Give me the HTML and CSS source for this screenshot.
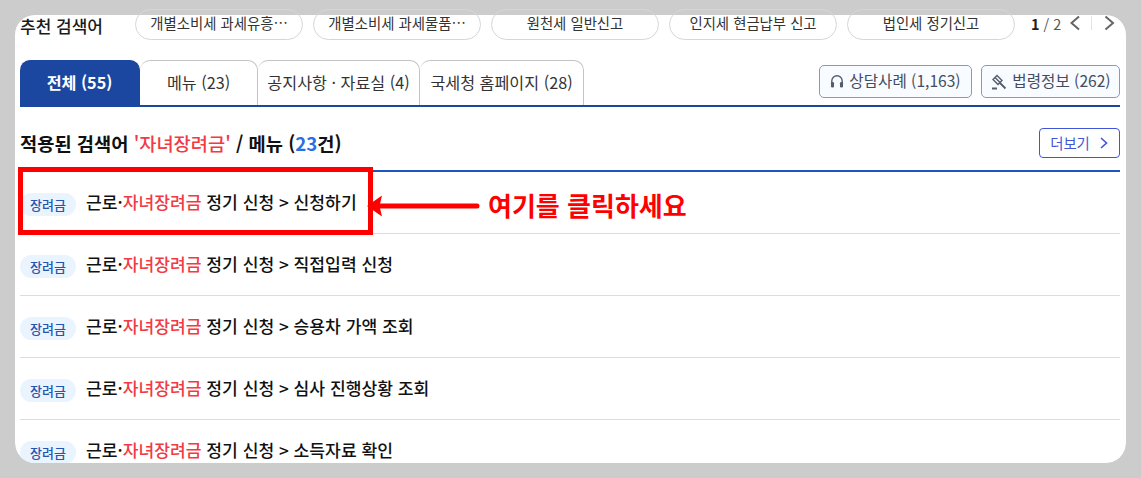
FILE: index.html
```html
<!DOCTYPE html>
<html lang="ko">
<head>
<meta charset="utf-8">
<title>추천 검색어</title>
<link rel="stylesheet" href="styles.css">
</head>
<body>
<div class="page">
  <main class="card">
    <section class="suggest">
      <h2 class="suggest-title">추천 검색어</h2>
      <div class="chips">
        <a class="chip">개별소비세 과세유흥…</a>
        <a class="chip">개별소비세 과세물품…</a>
        <a class="chip">원천세 일반신고</a>
        <a class="chip">인지세 현금납부 신고</a>
        <a class="chip">법인세 정기신고</a>
      </div>
      <div class="pager">
        <span class="pager-num"><b>1</b> / 2</span>
        <svg class="pager-arrow" width="12" height="16" viewBox="0 0 12 16"><path d="M10 1.500 2.500 8l7.500 6.500" /></svg>
        <span class="pager-sep"></span>
        <svg class="pager-arrow" width="12" height="16" viewBox="0 0 12 16"><path d="M1.500 1.500 9 8l-7.500 6.500" /></svg>
      </div>
    </section>

    <nav class="tabs">
      <a class="tab tab-active tab-all">전체 (55)</a>
      <a class="tab tab-menu">메뉴 (23)</a>
      <a class="tab tab-notice">공지사항 · 자료실 (4)</a>
      <a class="tab tab-home">국세청 홈페이지 (28)</a>
      <div class="side-buttons">
        <a class="side-btn side-btn-a">
          <svg width="14" height="15" viewBox="0 0 14 15"><path class="ico-line" d="M1.800 9V7a5.200 5.200 0 0 1 10.400 0v2"/><rect class="ico-fill" x="1" y="8" width="3" height="5.500" rx="1.200"/><rect class="ico-fill" x="10" y="8" width="3" height="5.500" rx="1.200"/></svg>
          상담사례 (1,163)
        </a>
        <a class="side-btn side-btn-b">
          <svg width="17" height="16" viewBox="0 0 17 16"><path class="ico-line" d="M7 1.500 12 6.500 8 10.500 3 5.500z"/><path class="ico-line" d="M5 3.500l5 5"/><path class="ico-thick" d="M9.500 8.500 15.500 14.500M2 14.500h5"/></svg>
          법령정보 (262)
        </a>
      </div>
    </nav>

    <div class="result-head">
      <h3 class="result-title">적용된 검색어 <span class="hl">'자녀장려금'</span> / 메뉴 (<span class="count">23</span>건)</h3>
      <a class="more">더보기
        <svg width="10" height="14" viewBox="0 0 10 14"><path d="M2 2l5.500 5L2 12"/></svg>
      </a>
    </div>

    <ul class="results">
      <li class="row"><span class="badge">장려금</span><a class="row-link">근로·<span class="hl">자녀장려금</span> 정기 신청 &gt; 신청하기</a></li>
      <li class="row"><span class="badge">장려금</span><a class="row-link">근로·<span class="hl">자녀장려금</span> 정기 신청 &gt; 직접입력 신청</a></li>
      <li class="row"><span class="badge">장려금</span><a class="row-link">근로·<span class="hl">자녀장려금</span> 정기 신청 &gt; 승용차 가액 조회</a></li>
      <li class="row"><span class="badge">장려금</span><a class="row-link">근로·<span class="hl">자녀장려금</span> 정기 신청 &gt; 심사 진행상황 조회</a></li>
      <li class="row"><span class="badge">장려금</span><a class="row-link">근로·<span class="hl">자녀장려금</span> 정기 신청 &gt; 소득자료 확인</a></li>
    </ul>
  </main>

  <div class="mark-box"></div>
  <svg class="mark-arrow" width="114" height="26" viewBox="0 0 114 26"><path class="mark-shaft" d="M10 13h100"/><path class="mark-head" d="M0 13 15 2.500 12.500 13 15 23.500z"/></svg>
  <div class="mark-text">여기를 클릭하세요</div>
</div>
</body>
</html>
```

FILE: styles.css
```css
* { box-sizing: border-box; }
html, body { margin: 0; padding: 0; }
body {
  background: #cccccc;
  font-family: "Noto Sans CJK KR", sans-serif;
  color: #222;
}
a { text-decoration: none; color: inherit; }
h2, h3, ul { margin: 0; padding: 0; list-style: none; }

.page {
  position: relative;
  width: 1141px;
  height: 478px;
  padding: 15px;
  overflow: hidden;
}
.card {
  display: flow-root;
  width: 1111px;
  height: 448px;
  padding: 0 6px 0 5px;
  background: #fff;
  border-radius: 20px;
  clip-path: inset(-7px 0 0 0 round 20px);
}

/* suggested keywords */
.suggest {
  display: flex;
  align-items: center;
  height: 31px;
  margin-top: -6px;
}
.suggest-title {
  width: 115px;
  font-size: 17px;
  font-weight: 500;
  color: #1b1b1b;
  line-height: 31px;
  padding-top: 2px;
}
.chips { display: flex; gap: 10px; }
.chip {
  width: 168px;
  height: 31px;
  border: 1px solid #d6d6d6;
  border-radius: 16px;
  font-size: 14.4px;
  line-height: 25px;
  text-align: center;
  color: #333;
}
.pager {
  display: flex;
  align-items: center;
  margin-left: 16px;
  padding-bottom: 3px;
  color: #555;
  font-size: 14.4px;
}
.pager-num { width: 38px; white-space: nowrap; }
.pager-num b { color: #222; font-weight: 700; }
.pager-arrow { fill: none; stroke: #666; stroke-width: 2; }
.pager-arrow:last-child { margin-left: 12px; }
.pager-sep { width: 1px; height: 14px; background: #e3e3e3; margin-left: 10px; }

/* tabs */
.tabs {
  display: flex;
  height: 47px;
  margin-top: 20px;
  border-bottom: 2px solid #1c47a0;
}
.tab {
  display: flex;
  align-items: center;
  justify-content: center;
  height: 45px;
  padding-bottom: 3px;
  border: 1px solid #c4c4c4;
  border-bottom: 0;
  border-left-width: 0;
  border-radius: 10px 10px 0 0;
  font-size: 16.2px;
  color: #333;
  white-space: nowrap;
}
.tab-active {
  background: #1c47a0;
  border-color: #1c47a0;
  color: #fff;
  font-weight: 700;
}
.tab-all { width: 120px; }
.tab-menu { width: 118px; }
.tab-notice { width: 162px; }
.tab-home { width: 164px; }
.side-buttons {
  display: flex;
  gap: 9px;
  margin-left: auto;
  padding-top: 5px;
}
.side-btn {
  display: flex;
  align-items: center;
  justify-content: center;
  gap: 5px;
  height: 33px;
  padding-bottom: 3px;
  border: 1px solid #7f99d2;
  border-radius: 5px;
  background: #f8fbff;
  font-size: 15.6px;
  color: #444c5e;
  white-space: nowrap;
}
.side-btn svg { margin-top: 3px; }
.side-btn-a { width: 153px; }
.side-btn-b { width: 139px; }
.ico-line { fill: none; stroke: #555c6c; stroke-width: 1.400; }
.ico-thick { fill: none; stroke: #555c6c; stroke-width: 1.800; }
.ico-fill { fill: #555c6c; }

/* result header */
.result-head {
  display: flex;
  align-items: center;
  justify-content: space-between;
  height: 30px;
  margin-top: 21px;
}
.result-title {
  padding-bottom: 2px;
  font-size: 18.7px;
  font-weight: 600;
  color: #111;
}
.hl { color: #f23a44; font-weight: 500; }
.count { color: #2a6ee6; }
.more {
  display: flex;
  align-items: center;
  justify-content: center;
  gap: 9px;
  width: 81px;
  height: 30px;
  padding-bottom: 2px;
  border: 1px solid #3f56d8;
  border-radius: 4px;
  font-size: 14.4px;
  color: #3f56d8;
}
.more svg { fill: none; stroke: #3f56d8; stroke-width: 1.600; margin-top: 2px; }

/* result rows */
.results {
  margin-top: 12px;
  border-top: 2px solid #1f55c0;
}
.row {
  display: flex;
  align-items: center;
  gap: 10px;
  height: 62px;
  border-bottom: 1px solid #dcdcdc;
}
.badge {
  width: 56px;
  height: 23px;
  margin-top: 3px;
  border-radius: 12px;
  background: #eaf4ff;
  font-size: 13px;
  font-weight: 500;
  line-height: 23px;
  text-align: center;
  color: #2456b0;
}
.row-link {
  margin-bottom: 2px;
  font-size: 17.15px;
  font-weight: 500;
  color: #111;
  white-space: nowrap;
}

/* annotation */
.mark-box {
  position: absolute;
  left: 18px;
  top: 167px;
  width: 355px;
  height: 68px;
  border: 5px solid #ff0000;
}
.mark-arrow {
  position: absolute;
  left: 367px;
  top: 193px;
}
.mark-shaft { fill: none; stroke: #ff0000; stroke-width: 5; stroke-linecap: round; }
.mark-head { fill: #ff0000; }
.mark-text {
  position: absolute;
  left: 488px;
  top: 187px;
  font-size: 26px;
  line-height: 36px;
  font-weight: 700;
  color: #ff0000;
  white-space: nowrap;
}
```
